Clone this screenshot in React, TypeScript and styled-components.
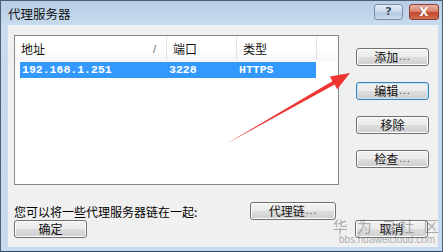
import React from "react";
import styled, { createGlobalStyle } from "styled-components";

const Global = createGlobalStyle`
  html, body { margin: 0; padding: 0; overflow: hidden; background: #c6d9ed; }
  * { box-sizing: border-box; }
`;

const CJK = `"Noto Sans CJK SC", "Noto Sans", sans-serif`;

const Window = styled.div`
  position: relative;
  width: 443px;
  height: 252px;
  border: 1px solid #4e5f74;
  border-bottom-color: #2b4a6b;
  background: linear-gradient(#b7cde6, #c9dcef 26px, #c6d9ed);
  display: flex;
  flex-direction: column;
  font-family: ${CJK};
  font-size: 12px;
  color: #000;
`;

const TitleBar = styled.div`
  height: 24px;
  display: flex;
  align-items: center;
  justify-content: space-between;
  padding: 0 3px 0 7px;
`;

const Title = styled.div`
  font-size: 12.5px;
  color: #111;
  line-height: 14px;
  margin-top: 1px;
`;

const Caption = styled.div`
  display: flex;
  gap: 6px;
  margin-top: -3px;
`;

const CapBtn = styled.div<{ $close?: boolean }>`
  width: ${(p) => (p.$close ? 30 : 29)}px;
  height: 16px;
  border-radius: 3px;
  border: 1px solid ${(p) => (p.$close ? "#8c3d2e" : "#7d8da3")};
  background: ${(p) =>
    p.$close
      ? "linear-gradient(#eab3a5, #d9836e 45%, #c0462c 55%, #d4704f)"
      : "linear-gradient(#e4edf7, #ccdaea 45%, #b6c9df 55%, #cad9ea)"};
  color: ${(p) => (p.$close ? "#fff" : "#3a4d66")};
  display: flex;
  align-items: center;
  justify-content: center;
  font-family: "DejaVu Sans", sans-serif;
  font-weight: bold;
  font-size: ${(p) => (p.$close ? 12 : 11)}px;
  line-height: 1;
  text-shadow: ${(p) => (p.$close ? "0 0 1px #6b1d10" : "none")};
`;

const Client = styled.div`
  flex: 1;
  margin: 0 4px 4px 7px;
  background: #f0f0f0;
  display: flex;
  flex-direction: column;
  padding: 10px 0 0 6px;
`;

const Top = styled.div`
  display: flex;
  gap: 17px;
`;

const ListBox = styled.div`
  width: 325px;
  height: 150px;
  border: 1px solid #828790;
  background: #fff;
  padding: 0 0 0 5px;
`;

const HeaderRow = styled.div`
  display: flex;
  height: 25px;
  margin-left: -5px;
  background: linear-gradient(#ffffff, #ffffff 50%, #f6f7f8);
`;

const HeadCell = styled.div<{ $w: number }>`
  width: ${(p) => p.$w}px;
  padding: 5px 0 0 6px;
  border-right: 1px solid #e3e5e8;
  position: relative;
  font-size: 12px;
  line-height: 16px;
  color: #111;
`;

const HeadFill = styled.div`
  flex: 1;
`;

const SortMark = styled.span`
  position: absolute;
  right: 10px;
  top: 5px;
  font-family: "Liberation Sans", sans-serif;
  color: #666;
  font-size: 11px;
`;

const Row = styled.div`
  display: flex;
  height: 16px;
  margin-top: 1px;
  width: 296px;
  background: #3399ff;
  color: #fff;
  font-family: "Liberation Mono", monospace;
  font-weight: bold;
  font-size: 11.5px;
  line-height: 16px;
`;

const Cell = styled.div<{ $w: number }>`
  width: ${(p) => p.$w}px;
  padding-left: 2px;
  white-space: nowrap;
`;

const ButtonCol = styled.div`
  display: flex;
  flex-direction: column;
  gap: 16px;
  padding-top: 13px;
`;

const Button = styled.div<{ $w?: number; $focus?: boolean }>`
  width: ${(p) => p.$w ?? 73}px;
  height: 18px;
  border: 1px solid ${(p) => (p.$focus ? "#3c7fb1" : "#707070")};
  border-radius: 3px;
  background: linear-gradient(#f2f2f2, #ebebeb 48%, #dddddd 52%, #cfcfcf);
  box-shadow: ${(p) =>
    p.$focus ? "inset 0 0 0 1px #bfe3f9" : "inset 0 0 0 1px #fcfcfc"};
  display: flex;
  align-items: center;
  justify-content: center;
  font-size: 12px;
  line-height: 14px;
  color: #111;
  white-space: nowrap;
`;

const Dots = styled.span`
  font-family: "Liberation Sans", sans-serif;
  letter-spacing: 1px;
  color: #444;
  font-size: 10px;
  margin-left: 1px;
`;

const Bottom = styled.div`
  display: grid;
  grid-template-columns: 236px 105px 73px;
  grid-template-rows: 18px 18px;
  margin-top: 17px;
  align-items: center;
`;

const Note = styled.div`
  font-size: 12px;
  line-height: 14px;
  margin-top: 2px;
`;

const Arrow = styled.svg`
  position: absolute;
  left: 0;
  top: 0;
  pointer-events: none;
`;

const Watermark = styled.div`
  position: absolute;
  left: 336px;
  top: 216px;
  width: 100px;
  color: rgba(110, 110, 110, 0.55);
  pointer-events: none;
  display: flex;
  flex-direction: column;
  align-items: center;
`;

const WmTitle = styled.div`
  font-size: 15px;
  line-height: 18px;
  letter-spacing: 3px;
  white-space: nowrap;
`;

const WmUrl = styled.div`
  font-family: "Liberation Sans", sans-serif;
  font-size: 10px;
  line-height: 10px;
  white-space: nowrap;
`;

export default function App() {
  return (
    <>
      <Global />
      <Window>
        <TitleBar>
          <Title>代理服务器</Title>
          <Caption>
            <CapBtn>?</CapBtn>
            <CapBtn $close>X</CapBtn>
          </Caption>
        </TitleBar>
        <Client>
          <Top>
            <ListBox>
              <HeaderRow>
                <HeadCell $w={152}>
                  地址<SortMark>/</SortMark>
                </HeadCell>
                <HeadCell $w={70}>端口</HeadCell>
                <HeadCell $w={80}>类型</HeadCell>
                <HeadFill />
              </HeaderRow>
              <Row>
                <Cell $w={147}>192.168.1.251</Cell>
                <Cell $w={70}>3228</Cell>
                <Cell $w={79}>HTTPS</Cell>
              </Row>
            </ListBox>
            <ButtonCol>
              <Button>
                添加<Dots>...</Dots>
              </Button>
              <Button $focus>
                编辑<Dots>...</Dots>
              </Button>
              <Button>移除</Button>
              <Button>
                检查<Dots>...</Dots>
              </Button>
            </ButtonCol>
          </Top>
          <Bottom>
            <Note>您可以将一些代理服务器链在一起:</Note>
            <Button $w={86}>
              代理链<Dots>...</Dots>
            </Button>
            <span />
            <Button>确定</Button>
            <span />
            <Button>取消</Button>
          </Bottom>
        </Client>
        <Arrow width="443" height="252" viewBox="0 0 443 252">
          <polygon
            points="225,143 331.4,80.2 328.9,75.5 349,72 336.2,88.3 333.6,83.6"
            fill="#ee3532"
          />
        </Arrow>
        <Watermark>
          <WmTitle>华 为 云社 区</WmTitle>
          <WmUrl>bbs.huaweicloud.com</WmUrl>
        </Watermark>
      </Window>
    </>
  );
}
